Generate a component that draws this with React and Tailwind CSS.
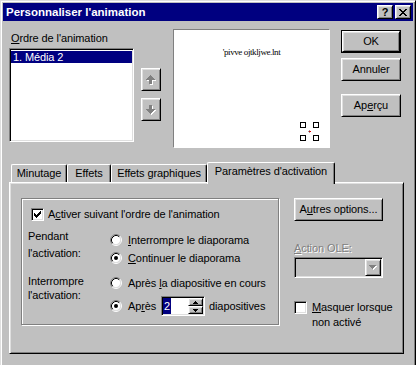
const raised =
  'border border-t-white border-l-white border-r-black border-b-black bg-[#c0c0c0] shadow-[inset_1px_1px_#dfdfdf,inset_-1px_-1px_#808080]'
const sunken =
  'border border-t-[#808080] border-l-[#808080] border-r-white border-b-white p-px shadow-[inset_1px_1px_#000,inset_-1px_-1px_#dfdfdf]'
const disabledText = 'text-[#808080] [text-shadow:1px_1px_0_#fff]'

const tabs = [
  { label: 'Minutage', width: 'w-[56px]' },
  { label: 'Effets', width: 'w-[44px]' },
  { label: 'Effets graphiques', width: 'w-[96px]' },
]

const checkCols = [2, 3, 4, 3, 2, 1, 0]
const closeRows = ['XX....XX', '.XX..XX.', '..XXXX..', '...XX...', '..XXXX..', '.XX..XX.', 'XX....XX']

function Btn({ className = '', children }) {
  return <div className={`flex items-center justify-center ${raised} ${className}`}>{children}</div>
}

function Check({ checked }) {
  return (
    <div className={`h-[13px] w-[13px] shrink-0 bg-white ${sunken}`}>
      {checked && (
        <svg className="ml-px mt-px" width="7" height="7" viewBox="0 0 7 7" shapeRendering="crispEdges">
          {checkCols.map((top, x) => (
            <rect key={x} x={x} y={top} width="1" height="3" fill="#000" />
          ))}
        </svg>
      )}
    </div>
  )
}

function Radio({ checked }) {
  return (
    <svg width="12" height="12" viewBox="0 0 12 12" className="shrink-0">
      <circle cx="6" cy="6" r="4.5" fill="#fff" />
      <path d="M2.11 9.89A5.5 5.5 0 0 1 9.89 2.11" fill="none" stroke="#808080" />
      <path d="M9.89 2.11A5.5 5.5 0 0 1 2.11 9.89" fill="none" stroke="#fff" />
      <path d="M2.82 9.18A4.5 4.5 0 0 1 9.18 2.82" fill="none" stroke="#000" />
      <path d="M9.18 2.82A4.5 4.5 0 0 1 2.82 9.18" fill="none" stroke="#dfdfdf" />
      {checked && <circle cx="6" cy="6" r="2" fill="#000" />}
    </svg>
  )
}

function MoveArrow({ down }) {
  const d = down
    ? 'M3 0H6V4H9V5H8V6H7V7H6V8H5V9H4V8H3V7H2V6H1V5H0V4H3Z'
    : 'M4 0H5V1H6V2H7V3H8V4H9V5H6V9H3V5H0V4H1V3H2V2H3V1H4Z'
  return (
    <svg width="10" height="10" viewBox="0 0 10 10" shapeRendering="crispEdges">
      <path d={d} transform="translate(1 1)" fill="#fff" />
      <path d={d} fill="#808080" />
    </svg>
  )
}

function SpinArrow({ down }) {
  return (
    <svg width="5" height="3" viewBox="0 0 5 3" shapeRendering="crispEdges">
      <path d={down ? 'M0 0H5V1H4V2H3V3H2V2H1V1H0Z' : 'M2 0H3V1H4V2H5V3H0V2H1V1H2Z'} fill="#000" />
    </svg>
  )
}

function CloseGlyph() {
  return (
    <svg width="8" height="7" viewBox="0 0 8 7" shapeRendering="crispEdges">
      {closeRows.map((row, y) =>
        row.split('').map((c, x) => (c === 'X' ? <rect key={`${x}-${y}`} x={x} y={y} width="1" height="1" fill="#000" /> : null)),
      )}
    </svg>
  )
}

export default function App() {
  return (
    <div className="h-[365px] w-[416px] overflow-hidden bg-[#c0c0c0] font-['Liberation_Sans',Arial,sans-serif] text-[11px] leading-[13px] tracking-[-0.1px] text-black">
      <div className="h-[400px] border border-t-[#dfdfdf] border-l-[#dfdfdf] border-r-black border-b-black p-[2px] shadow-[inset_1px_1px_#fff,inset_-1px_-1px_#808080]">
        {/* title bar */}
        <div className="flex h-[18px] items-center justify-between bg-[#000080] pl-[3px] pr-[2px]">
          <span className="text-[11.5px] font-bold tracking-normal text-white">Personnaliser l'animation</span>
          <div className="flex gap-[2px]">
            <Btn className="h-[14px] w-[16px] text-[11px] font-bold leading-none">?</Btn>
            <Btn className="h-[14px] w-[16px]">
              <CloseGlyph />
            </Btn>
          </div>
        </div>

        {/* top section */}
        <div className="flex items-start pl-[6px]">
          <div className="w-[125px] pt-[11px]">
            <div className="h-[13px] pl-[2px]">
              <u>O</u>rdre de l'animation
            </div>
            <div className={`mt-[3px] h-[94px] bg-white ${sunken}`}>
              <div className="mt-px h-[12px] bg-[#000080] pl-[2px] leading-[12px] text-white">1. Média 2</div>
            </div>
          </div>

          <div className="ml-[7px] w-[20px] pt-[47px]">
            <Btn className="h-[23px] w-[20px]">
              <MoveArrow />
            </Btn>
            <Btn className="mt-[7px] h-[23px] w-[20px]">
              <MoveArrow down />
            </Btn>
          </div>

          <div className="relative ml-[12px] mt-[8px] h-[119px] w-[157px] border border-t-[#808080] border-l-[#808080] border-r-white border-b-white bg-white">
            <div className="mt-[17px] text-center font-['Liberation_Serif',serif] text-[9px] leading-[10px] tracking-[-0.4px]">
              'pivve ojtkljwe.lnt
            </div>
            <div className="absolute left-[126px] top-[92px] grid grid-cols-2 gap-[7px]">
              <div className="h-[6px] w-[6px] border border-black bg-white" />
              <div className="h-[6px] w-[6px] border border-black bg-white" />
              <div className="h-[6px] w-[6px] border border-black bg-white" />
              <div className="h-[6px] w-[6px] border border-black bg-white" />
            </div>
            <svg className="absolute left-[134px] top-[100px]" width="3" height="3" viewBox="0 0 3 3" shapeRendering="crispEdges">
              <rect x="0" y="1" width="1" height="1" fill="#a0a0a0" />
              <rect x="1" y="0" width="1" height="1" fill="#a0a0a0" />
              <rect x="1" y="1" width="1" height="1" fill="#e00000" />
              <rect x="1" y="2" width="1" height="1" fill="#a0a0a0" />
              <rect x="2" y="1" width="1" height="1" fill="#e00000" />
            </svg>
          </div>

          <div className="ml-[11px] mt-[9px] w-[60px]">
            <div className="h-[23px] w-[60px] border border-black">
              <Btn className="h-full w-full">OK</Btn>
            </div>
            <Btn className="mt-[5px] h-[23px] w-[60px]">Annuler</Btn>
            <Btn className="mt-[13px] h-[23px] w-[60px]">
              <span>
                Ap<u>e</u>rçu
              </span>
            </Btn>
          </div>
        </div>

        {/* tabs */}
        <div className="ml-[6px] mt-[14px] w-[395px]">
          <div className="flex h-[20px] items-end pl-[2px]">
            {tabs.map((tab) => (
              <div
                key={tab.label}
                className={`h-[18px] ${tab.width} rounded-t-[2px] border-l border-t border-r border-l-white border-t-white border-r-black pt-[2px] text-center shadow-[inset_-1px_0_#808080]`}
              >
                {tab.label}
              </div>
            ))}
            <div className="relative z-10 -mb-[2px] h-[22px] w-[128px] rounded-t-[2px] border-l border-t border-r border-l-white border-t-white border-r-black bg-[#c0c0c0] pt-[2px] text-center shadow-[inset_-1px_0_#808080]">
              Paramètres d'activation
            </div>
          </div>

          <div className="flex h-[172px] items-start border border-t-white border-l-white border-r-black border-b-black p-px shadow-[inset_1px_1px_#dfdfdf,inset_-1px_-1px_#808080]">
            {/* group box */}
            <div className="ml-[10px] mt-[14px] h-[127px] w-[258px] border border-[#808080] shadow-[inset_1px_1px_#fff,1px_1px_#fff]">
              <div className="ml-[9px] mt-[9px] flex h-[13px] items-center gap-[4px]">
                <Check checked />
                <span>
                  A<u>c</u>tiver suivant l'ordre de l'animation
                </span>
              </div>

              <div className="mt-[9px] flex">
                <div className="ml-[6px] w-[82px]">
                  <div className="h-[17px]">Pendant</div>
                  <div className="h-[13px]">l'activation:</div>
                </div>
                <div className="pt-px">
                  <div className="flex h-[18px] items-center gap-[6px]">
                    <Radio />
                    <span>
                      <u>I</u>nterrompre le diaporama
                    </span>
                  </div>
                  <div className="flex h-[18px] items-center gap-[6px]">
                    <Radio checked />
                    <span>
                      <u>C</u>ontinuer le diaporama
                    </span>
                  </div>
                </div>
              </div>

              <div className="mt-[8px] flex">
                <div className="ml-[6px] w-[82px]">
                  <div className="h-[14px]">Interrompre</div>
                  <div className="h-[13px]">l'activation:</div>
                </div>
                <div>
                  <div className="flex h-[16px] items-center gap-[6px]">
                    <Radio />
                    <span>
                      Après <u>l</u>a diapositive en cours
                    </span>
                  </div>
                  <div className="mt-[5px] flex h-[20px] items-center">
                    <Radio checked />
                    <span className="ml-[6px] w-[33px]">
                      Ap<u>r</u>ès
                    </span>
                    <div className={`flex h-[20px] w-[44px] bg-white ${sunken}`}>
                      <div className="flex-1">
                        <div className="flex h-full w-[8px] items-center justify-center bg-[#000080] text-white">2</div>
                      </div>
                      <div className="w-[15px]">
                        <Btn className="h-[8px] w-[15px]">
                          <SpinArrow />
                        </Btn>
                        <Btn className="h-[8px] w-[15px]">
                          <SpinArrow down />
                        </Btn>
                      </div>
                    </div>
                    <span className="ml-[4px]">diapositives</span>
                  </div>
                </div>
              </div>
            </div>

            {/* right column */}
            <div className="ml-[15px] mt-[14px] w-[89px]">
              <Btn className="h-[23px] w-[89px]">
                <span>
                  A<u>u</u>tres options...
                </span>
              </Btn>
              <div className={`mt-[21px] h-[13px] ${disabledText}`}>
                <u>A</u>ction OLE:
              </div>
              <div className={`mt-[2px] flex h-[21px] w-[89px] justify-end ${sunken}`}>
                <Btn className="h-full w-[16px]">
                  <svg width="8" height="5" viewBox="0 0 8 5" shapeRendering="crispEdges">
                    <path d="M0 0H7V1H6V2H5V3H4V4H3V3H2V2H1V1H0Z" transform="translate(1 1)" fill="#fff" />
                    <path d="M0 0H7V1H6V2H5V3H4V4H3V3H2V2H1V1H0Z" fill="#808080" />
                  </svg>
                </Btn>
              </div>
              <div className="mt-[22px] flex items-start">
                <div className="mt-px">
                  <Check />
                </div>
                <span className="ml-[5px] whitespace-nowrap leading-[15px]">
                  <u>M</u>asquer lorsque
                  <br />
                  non activé
                </span>
              </div>
            </div>
          </div>
        </div>
      </div>
    </div>
  )
}
